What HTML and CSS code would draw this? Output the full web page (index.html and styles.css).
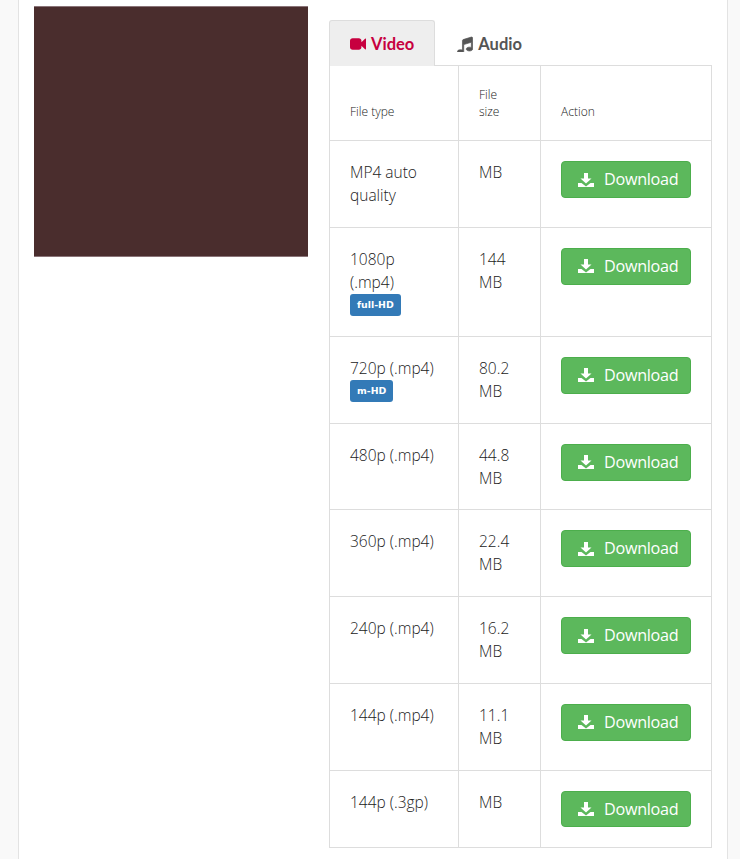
FILE: index.html
```html
<!DOCTYPE html>
<html lang="en">
  <head>
    <meta charset="UTF-8" />
    <title>Download</title>
    <link rel="stylesheet" href="styles.css">
  </head>
  <body>
    <div class="card">
      <div class="thumb"></div>
      <div class="panel">
        <ul class="tabs">
          <li class="tab active">
            <svg class="tab-icon" width="16" height="12" viewBox="0 256 1792 1280"><path d="M1792 352v1088q0 42-39 59-13 5-25 5-27 0-45-19l-403-403v166q0 119-84.500 203.500t-203.500 84.500h-704q-119 0-203.500-84.500t-84.500-203.500v-704q0-119 84.500-203.500t203.500-84.500h704q119 0 203.500 84.500t84.500 203.500v165l403-402q18-19 45-19 12 0 25 5 39 17 39 59z" fill="currentColor"/></svg>
            Video
          </li>
          <li class="tab">
            <svg class="tab-icon" width="16" height="16" viewBox="88 136 1616 1488"><path d="M1664 272v1120q0 50-34 89t-86 60.500-103.500 32-96.500 10.500-96.500-10.500-103.500-32-86-60.500-34-89 34-89 86-60.500 103.500-32 96.500-10.500q105 0 192 39v-537l-768 237v709q0 50-34 89t-86 60.500-103.500 32-96.500 10.500-96.500-10.500-103.500-32-86-60.500-34-89 34-89 86-60.500 103.500-32 96.500-10.500q105 0 192 39v-967q0-31 19-56.500t49-35.500l832-256q12-4 28-4 40 0 68 28t28 68z" fill="currentColor" stroke="currentColor" stroke-width="70"/></svg>
            Audio
          </li>
        </ul>
        <table class="formats">
          <thead>
            <tr>
              <th class="col-type">File type</th>
              <th class="col-size">File size</th>
              <th class="col-action">Action</th>
            </tr>
          </thead>
          <tbody>
            <tr>
              <td>MP4 auto quality</td>
              <td>MB</td>
              <td><a class="btn"><svg class="btn-icon" width="16" height="16" viewBox="0 0 16 16"><path d="M6 1h4v5.500h3.500L8 11.500 2.500 6.500H6z M0 11h3.500L8 14.500 12.500 11H16v4H0z" fill="currentColor"/></svg>Download</a></td>
            </tr>
            <tr>
              <td>1080p (.mp4)<span class="badge">full-HD</span></td>
              <td>144 MB</td>
              <td><a class="btn"><svg class="btn-icon" width="16" height="16" viewBox="0 0 16 16"><path d="M6 1h4v5.500h3.500L8 11.500 2.500 6.500H6z M0 11h3.500L8 14.500 12.500 11H16v4H0z" fill="currentColor"/></svg>Download</a></td>
            </tr>
            <tr>
              <td>720p (.mp4)<span class="badge">m-HD</span></td>
              <td>80.2 MB</td>
              <td><a class="btn"><svg class="btn-icon" width="16" height="16" viewBox="0 0 16 16"><path d="M6 1h4v5.500h3.500L8 11.500 2.500 6.500H6z M0 11h3.500L8 14.500 12.500 11H16v4H0z" fill="currentColor"/></svg>Download</a></td>
            </tr>
            <tr>
              <td>480p (.mp4)</td>
              <td>44.8 MB</td>
              <td><a class="btn"><svg class="btn-icon" width="16" height="16" viewBox="0 0 16 16"><path d="M6 1h4v5.500h3.500L8 11.500 2.500 6.500H6z M0 11h3.500L8 14.500 12.500 11H16v4H0z" fill="currentColor"/></svg>Download</a></td>
            </tr>
            <tr>
              <td>360p (.mp4)</td>
              <td>22.4 MB</td>
              <td><a class="btn"><svg class="btn-icon" width="16" height="16" viewBox="0 0 16 16"><path d="M6 1h4v5.500h3.500L8 11.500 2.500 6.500H6z M0 11h3.500L8 14.500 12.500 11H16v4H0z" fill="currentColor"/></svg>Download</a></td>
            </tr>
            <tr>
              <td>240p (.mp4)</td>
              <td>16.2 MB</td>
              <td><a class="btn"><svg class="btn-icon" width="16" height="16" viewBox="0 0 16 16"><path d="M6 1h4v5.500h3.500L8 11.500 2.500 6.500H6z M0 11h3.500L8 14.500 12.500 11H16v4H0z" fill="currentColor"/></svg>Download</a></td>
            </tr>
            <tr>
              <td>144p (.mp4)</td>
              <td>11.1 MB</td>
              <td><a class="btn"><svg class="btn-icon" width="16" height="16" viewBox="0 0 16 16"><path d="M6 1h4v5.500h3.500L8 11.500 2.500 6.500H6z M0 11h3.500L8 14.500 12.500 11H16v4H0z" fill="currentColor"/></svg>Download</a></td>
            </tr>
            <tr>
              <td>144p (.3gp)</td>
              <td>MB</td>
              <td><a class="btn"><svg class="btn-icon" width="16" height="16" viewBox="0 0 16 16"><path d="M6 1h4v5.500h3.500L8 11.500 2.500 6.500H6z M0 11h3.500L8 14.500 12.500 11H16v4H0z" fill="currentColor"/></svg>Download</a></td>
            </tr>
          </tbody>
        </table>
      </div>
    </div>
  </body>
</html>
```

FILE: styles.css
```css
html,
body {
  margin: 0;
  height: 859px;
  overflow: hidden;
}
body {
  background-color: #f9f9f9;
  font-family: "Open Sans", Arial, sans-serif;
  color: #333;
}
.card {
  display: flex;
  align-items: flex-start;
  box-sizing: border-box;
  width: 710px;
  height: 859px;
  margin-left: 18px;
  padding: 6px 15px 0 15px;
  background-color: #fff;
  border-left: 1px solid #e3e3e3;
  border-right: 1px solid #e3e3e3;
}
.thumb {
  flex: none;
  box-sizing: border-box;
  width: 274px;
  height: 251px;
  background-color: #4a2d2d;
  border: 1px solid #8a7478;
  border-width: 1px 0;
}
.panel {
  flex: none;
  width: 383px;
  margin-left: 21px;
  padding-top: 14px;
}
.tabs {
  display: flex;
  margin: 0;
  padding: 0;
  list-style: none;
  height: 45px;
}
.tab {
  display: flex;
  align-items: center;
  box-sizing: border-box;
  height: 46px;
  padding: 0 20px;
  font-family: Lato, "Open Sans", sans-serif;
  font-size: 16.500px;
  font-weight: 700;
  color: #555;
  border: 1px solid transparent;
  border-bottom: none;
  border-radius: 3px 3px 0 0;
}
.tab + .tab {
  margin-left: 1px;
}
.tab.active {
  color: #c7003f;
  background-color: #eee;
  border-color: #ddd;
}
.tab-icon {
  margin-right: 5px;
}
.formats {
  width: 383px;
  table-layout: fixed;
  border-collapse: collapse;
  background-color: #fff;
}
.formats th,
.formats td {
  padding: 20px;
  border: 1px solid #ddd;
  text-align: left;
  vertical-align: top;
}
.formats th {
  vertical-align: bottom;
  font-size: 12px;
  font-weight: 300;
  line-height: 17.140px;
  color: #222;
}
.formats td {
  font-size: 15.500px;
  font-weight: 300;
  line-height: 22.857px;
  color: #222;
}
.col-type {
  width: 88px;
}
.col-size {
  width: 41px;
}
.badge {
  display: block;
  box-sizing: border-box;
  width: fit-content;
  height: 22.250px;
  padding: 0 7px;
  background-color: #337ab7;
  border-radius: 3px;
  color: #fff;
  font-family: "DejaVu Sans", sans-serif;
  font-size: 9.400px;
  font-weight: 700;
  line-height: 22px;
}
.btn {
  display: flex;
  align-items: center;
  box-sizing: border-box;
  width: 130px;
  height: 36.857px;
  padding-left: 16px;
  background-color: #5cb85c;
  border: 1px solid #4cae4c;
  border-radius: 4px;
  color: #fff;
  font-size: 16.200px;
  font-weight: 400;
  letter-spacing: -0.3px;
}
.btn-icon {
  margin-right: 10px;
}
```
